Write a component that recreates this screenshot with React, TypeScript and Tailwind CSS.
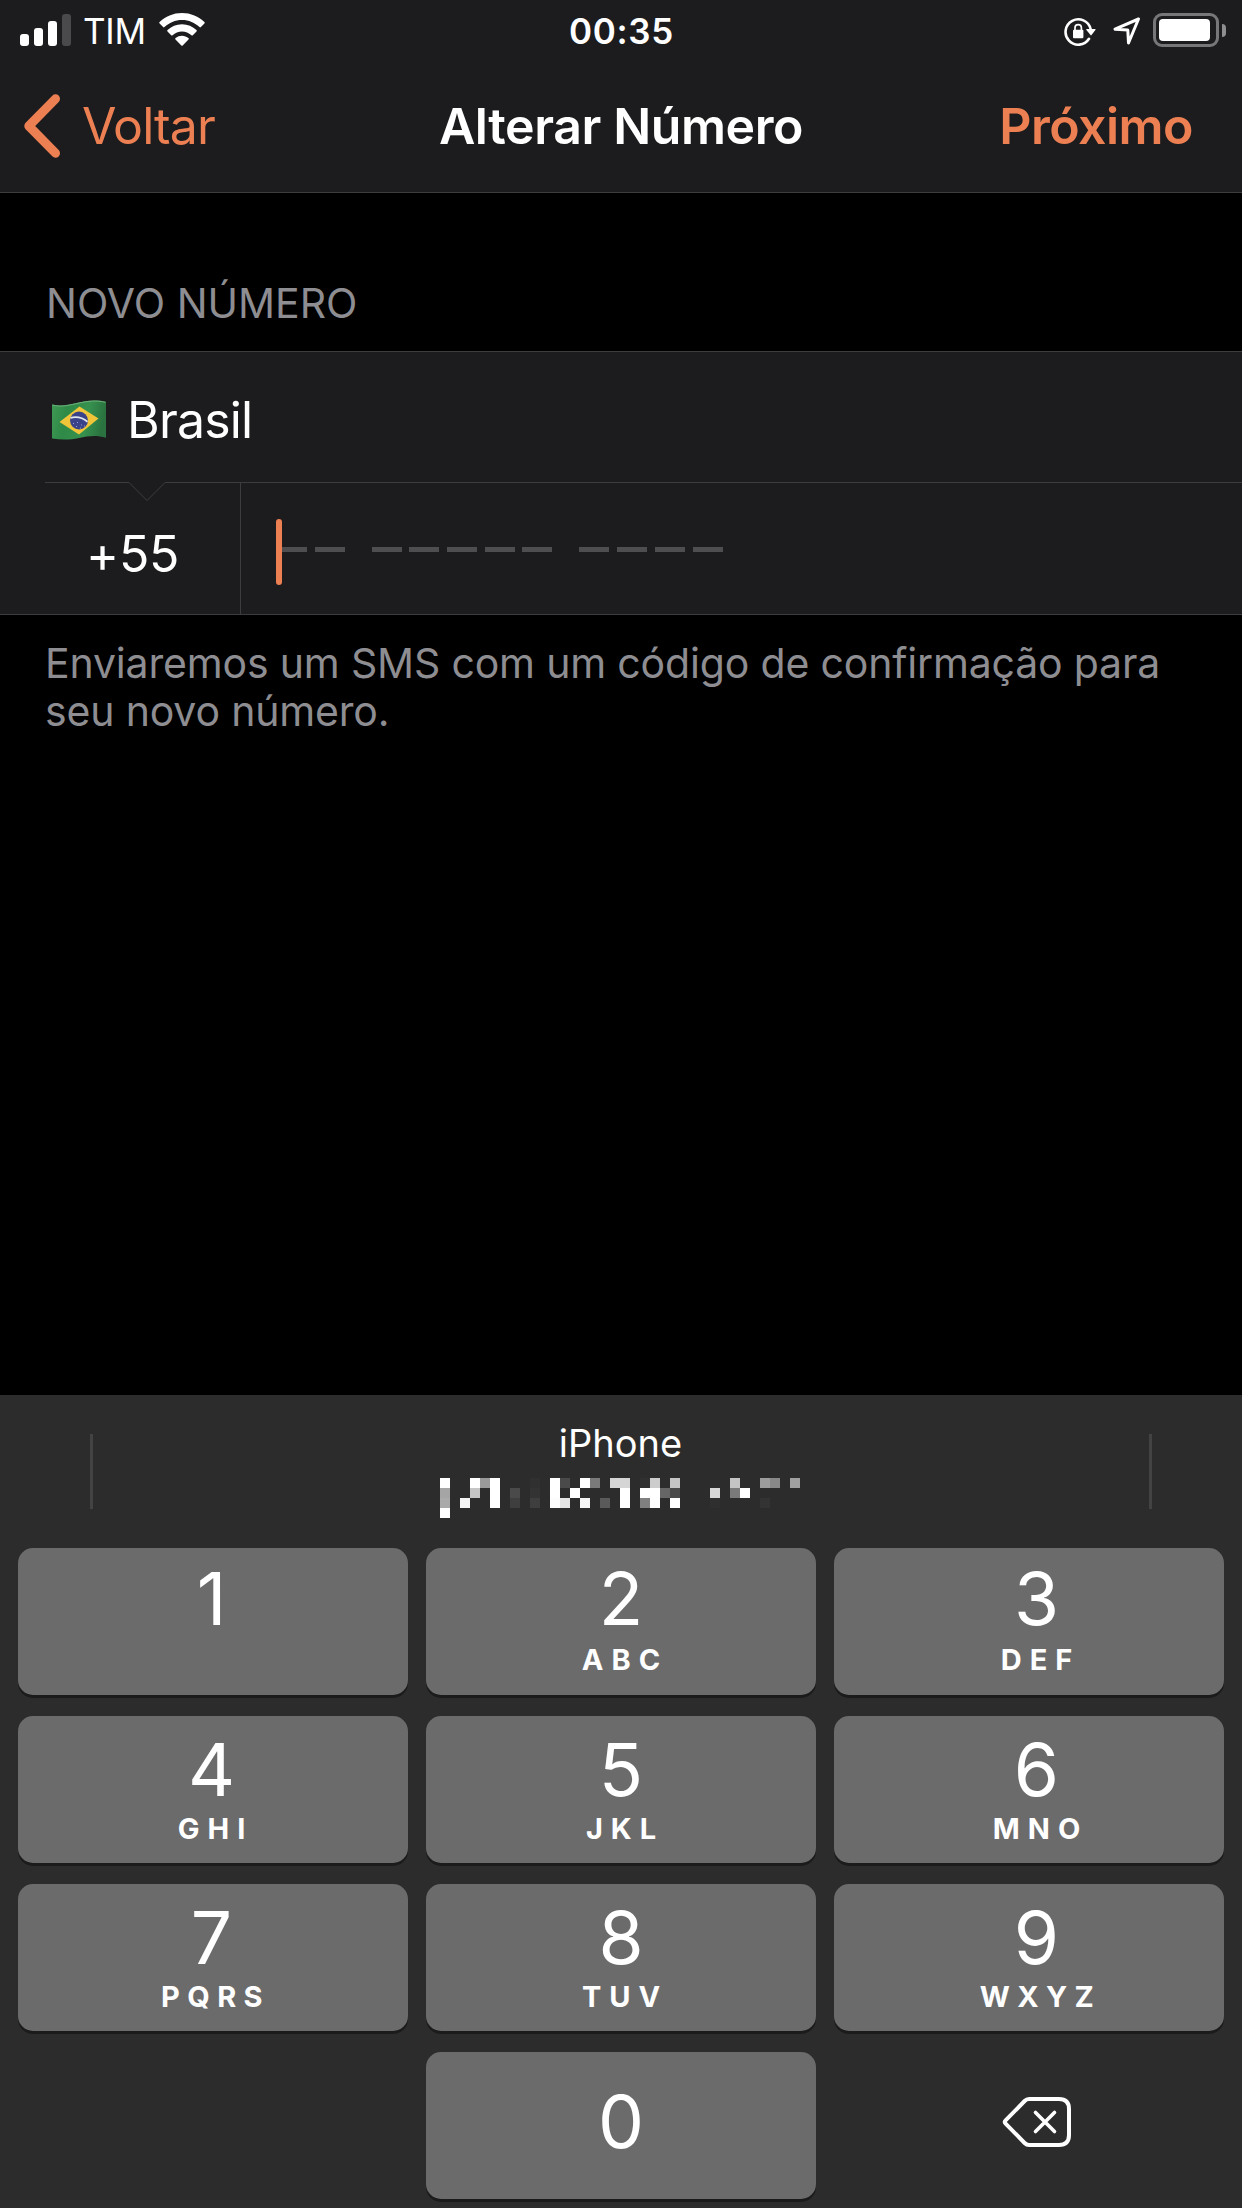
import clsx from "clsx";

type Key = { digit: string; letters?: string };

const keys: Key[] = [
  { digit: "1" },
  { digit: "2", letters: "ABC" },
  { digit: "3", letters: "DEF" },
  { digit: "4", letters: "GHI" },
  { digit: "5", letters: "JKL" },
  { digit: "6", letters: "MNO" },
  { digit: "7", letters: "PQRS" },
  { digit: "8", letters: "TUV" },
  { digit: "9", letters: "WXYZ" },
];

// [column, row, colour] on a 10px grid
const mosaic: [number, number, string][] = [
  [0, 0, "#fff"], [3, 0, "#fff"], [4, 0, "#999"], [5, 0, "#fff"], [9, 0, "#303030"],
  [11, 0, "#fff"], [12, 0, "#4a4a4a"], [14, 0, "#fff"], [15, 0, "#7a7a7a"],
  [17, 0, "#d5d5d5"], [18, 0, "#d5d5d5"], [20, 0, "#303030"], [21, 0, "#ccc"],
  [23, 0, "#c5c5c5"], [29, 0, "#c5c5c5"], [32, 0, "#9c9c9c"], [33, 0, "#888"], [35, 0, "#a0a0a0"],
  [0, 1, "#a5a5a5"], [3, 1, "#c5c5c5"], [5, 1, "#fff"], [7, 1, "#4a4a4a"], [9, 1, "#333"],
  [11, 1, "#fff"], [13, 1, "#fff"], [18, 1, "#fff"], [20, 1, "#fff"], [21, 1, "#fff"],
  [22, 1, "#666"], [23, 1, "#4a4a4a"], [27, 1, "#d8d8d8"], [29, 1, "#7a7a7a"], [30, 1, "#fff"],
  [0, 2, "#aaa"], [2, 2, "#f5f5f5"], [5, 2, "#fff"], [7, 2, "#3e3e3e"], [9, 2, "#3e3e3e"],
  [11, 2, "#fcfcfc"], [12, 2, "#e5e5e5"], [14, 2, "#f5f5f5"], [16, 2, "#5a5a5a"], [18, 2, "#fff"],
  [20, 2, "#808080"], [21, 2, "#fff"], [23, 2, "#fff"], [27, 2, "#2f2f2f"], [32, 2, "#333"],
  [0, 3, "#fff"],
];

function StatusBar() {
  return (
    <div className="flex h-[60px] pl-5 pr-4 text-white">
      <div className="flex flex-1 items-start">
        <div className="mt-[14px] flex h-8 items-end gap-[5px]">
          <span className="h-3 w-[9px] rounded-[3px] bg-white" />
          <span className="h-[18px] w-[9px] rounded-[3px] bg-white" />
          <span className="h-[25px] w-[9px] rounded-[3px] bg-white" />
          <span className="h-8 w-[9px] rounded-[3px] bg-[#4a4a4c]" />
        </div>
        <span className="ml-3 w-[63px] pt-[11px] text-[35px] leading-10 tracking-[-0.3px]">TIM</span>
        <svg className="ml-[13px] mt-[13px]" width="46" height="33" viewBox="0 0 46 33" fill="white">
          <path d="M23 0C31.800 0 39.600 3.400 45.400 9.100a1 1 0 0 1 0 1.400l-3.500 3.600a1 1 0 0 1-1.400 0C35.900 9.600 29.800 6.900 23 6.900S10.100 9.600 5.500 14.100a1 1 0 0 1-1.400 0L.6 10.500a1 1 0 0 1 0-1.400C6.400 3.400 14.200 0 23 0Z" />
          <path d="M23 11.300c5.600 0 10.700 2.200 14.500 5.800a1 1 0 0 1 0 1.400l-3.700 3.700a1 1 0 0 1-1.400 0A13.600 13.600 0 0 0 23 18.400c-3.600 0-6.900 1.400-9.400 3.800a1 1 0 0 1-1.400 0l-3.700-3.700a1 1 0 0 1 0-1.400C12.300 13.500 17.400 11.300 23 11.300Z" />
          <path d="M23 22.700c2.500 0 4.700.9 6.400 2.400a1 1 0 0 1 .1 1.500l-5.800 5.900a1 1 0 0 1-1.400 0l-5.800-5.900a1 1 0 0 1 .1-1.500A9.800 9.800 0 0 1 23 22.700Z" />
        </svg>
      </div>
      <span className="pr-[3px] pt-[11px] text-[35px] font-semibold leading-10 tracking-[0.7px]">00:35</span>
      <div className="flex flex-1 items-start justify-end">
        <svg className="mt-[17px]" width="32" height="30" viewBox="0 0 32 30">
          <path d="M25 21.800A12.700 12.700 0 1 1 26.600 12" fill="none" stroke="white" strokeWidth="2.600" strokeLinecap="round" />
          <path d="M22.800 12h8.200c.5 0 .7.500.4.900l-3.900 5.200c-.3.400-.7.400-1 0l-4.100-5.200c-.3-.4-.1-.9.4-.9Z" fill="white" />
          <rect x="9" y="12.700" width="10.400" height="8.600" rx="1" fill="white" />
          <path d="M11 14v-3.200a3.200 3.200 0 0 1 6.400 0V14" fill="none" stroke="white" strokeWidth="1.700" />
        </svg>
        <svg className="ml-[17px] mt-4" width="28" height="30" viewBox="0 0 28 30" fill="none" stroke="white" strokeWidth="3" strokeLinejoin="round">
          <path d="M25.500 3 2 13.200l12.800.8.700 13Z" />
        </svg>
        <div className="ml-[12px] mt-[13px] h-[34px] w-[66px] rounded-[9px] border-[3px] border-[#77777a] p-[3px]">
          <div className="h-[22px] w-[51px] rounded-[4px] bg-white" />
        </div>
        <span className="ml-[3px] mt-6 h-[13px] w-1 rounded-r-full bg-[#8e8e90]" />
      </div>
    </div>
  );
}

function NavBar() {
  return (
    <nav className="flex h-[132px] items-center px-6 text-[50px] leading-[60px] text-[#ed8053]">
      <div className="flex flex-1 items-center">
        <svg width="36" height="64" viewBox="0 0 36 64" fill="none" stroke="currentColor" strokeWidth="9" strokeLinecap="round" strokeLinejoin="round">
          <path d="M31.500 4.800 4.800 32l26.700 27.200" />
        </svg>
        <span className="ml-[22px] tracking-[-0.9px]">Voltar</span>
      </div>
      <h1 className="font-semibold tracking-[-0.4px] text-white">Alterar Número</h1>
      <div className="flex flex-1 justify-end">
        <span className="mr-[25px] font-semibold tracking-[-0.5px]">Próximo</span>
      </div>
    </nav>
  );
}

function BrazilFlag() {
  return (
    <svg width="54" height="40" viewBox="0 0 54 40">
      <defs>
        <linearGradient id="flag" x1="0" x2="1" y1="0" y2=".15">
          <stop offset="0" stopColor="#3f9a55" />
          <stop offset=".3" stopColor="#2f8a48" />
          <stop offset=".7" stopColor="#36914e" />
          <stop offset="1" stopColor="#2a7340" />
        </linearGradient>
      </defs>
      <path d="M0 4.500C9 7 18 4.500 27 2.500S45-.5 54 1.800v36C45 35 36 36 27 38S9 40 0 38.500Z" fill="url(#flag)" />
      <path d="M.5 5C9 7.500 18 5 27 3s18-3 26.500-.7" fill="none" stroke="#6fb47d" strokeWidth="1" />
      <path d="M7.500 22 27.500 6.500 46.500 18.500 27 34.500Z" fill="#f0c53a" />
      <circle cx="27" cy="20.500" r="9" fill="#3a4389" />
      <path d="M18.500 17.800c6-1.500 12-.3 17 4" fill="none" stroke="#dfe6ee" strokeWidth="1.800" />
      <path d="M21 23.500h1M25 22.500h1M24 26.500h1M29 25h1M28 28h1M32 26h1" stroke="#9aa0cf" strokeWidth="1" />
    </svg>
  );
}

function Dashes({ count }: { count: number }) {
  return (
    <div className="flex gap-[7.700px]">
      {Array.from({ length: count }, (_, i) => (
        <span key={i} className="h-[5px] w-[30px] bg-[#4e4e50]" />
      ))}
    </div>
  );
}

function PhoneForm() {
  return (
    <section>
      <h2 className="pl-[46px] pt-[85px] text-[41px] leading-[50px] text-[#8d8d92]">NOVO NÚMERO</h2>
      <div className="mt-[23px] border-y border-[#3c3c3f] bg-[#1c1c1e] text-white">
        <div className="flex h-[130px] items-center pl-[52px] pt-[5px]">
          <BrazilFlag />
          <span className="ml-[21px] pt-px text-[50px] leading-[60px] tracking-[-0.8px]">Brasil</span>
        </div>
        {/* divider with the notch that points at the country code */}
        <svg className="block" width="1242" height="20" viewBox="0 0 1242 20" fill="none" stroke="#3c3c3f">
          <path d="M45 .5h84l18 18 18-18h1077" />
        </svg>
        <div className="-mt-[19px] flex h-[131px]">
          <div className="w-[241px] border-r border-[#3c3c3f] pl-[86px] pt-[41px] text-[50px] leading-[60px] tracking-[-0.2px]">
            +55
          </div>
          <div className="relative flex items-start gap-[27px] pl-[36px] pt-[64px]">
            <Dashes count={2} />
            <Dashes count={5} />
            <Dashes count={4} />
            <span className="absolute left-[35px] top-9 h-[66px] w-[6px] rounded-full bg-[#ed8053]" />
          </div>
        </div>
      </div>
      <p className="pl-[45px] pt-[24px] text-[41px] leading-[48px] tracking-[-0.17px] text-[#8d8d92]">
        Enviaremos um SMS com um código de confirmação para
        <br />
        seu novo número.
      </p>
    </section>
  );
}

function Suggestion() {
  return (
    <div className="flex h-[153px] justify-between px-[90px] pt-[39px]">
      <span className="h-[75px] w-[3px] bg-[#434343]" />
      <div className="flex w-[364px] flex-col items-center">
        <span className="-mt-[16px] pr-px text-[38px] leading-[50px] text-white">iPhone</span>
        <svg className="mt-[10px]" width="362" height="40" viewBox="0 0 362 40" shapeRendering="crispEdges">
          {mosaic.map(([x, y, fill]) => (
            <rect key={`${x}-${y}`} x={x * 10} y={y * 10} width="10" height="10" fill={fill} />
          ))}
        </svg>
      </div>
      <span className="h-[75px] w-[3px] bg-[#434343]" />
    </div>
  );
}

function KeyButton({ digit, letters, index }: Key & { index: number }) {
  return (
    <button
      className={clsx(
        "flex h-[147px] flex-col items-center rounded-[15px] bg-[#6b6b6b] text-white shadow-[0_3px_0_#1b1b1b]",
        index < 3 ? "pt-[11px]" : index < 9 ? "pt-[14px]" : "pt-[30px]",
        index % 3 === 0 && "pr-[3px]",
        index % 3 === 2 && "pl-[15px]",
      )}
    >
      <span className="text-[73px] leading-[80px]">{digit}</span>
      {letters && (
        <span
          className={clsx(
            "pl-[8px] text-[29px] font-bold leading-[36px]",
            letters.length > 3 ? "tracking-[7.400px]" : "tracking-[8px]",
            index < 3 ? "mt-[3px]" : "mt-px",
          )}
        >
          {letters}
        </span>
      )}
    </button>
  );
}

function Keyboard() {
  return (
    <div className="h-[813px] bg-[#2c2c2c]">
      <Suggestion />
      <div className="grid grid-cols-3 gap-x-[18px] gap-y-[21px] px-[18px]">
        {keys.map((key, i) => (
          <KeyButton key={key.digit} index={i} {...key} />
        ))}
        <span />
        <KeyButton digit="0" index={10} />
        <button className="flex h-[147px] items-center justify-center pl-[16px]">
          <svg className="-mt-[7px]" width="70" height="52" viewBox="0 0 70 52" fill="none" stroke="white" strokeWidth="4" strokeLinecap="round" strokeLinejoin="round">
            <path d="M27 3h30c6.500 0 10 3.500 10 10v26c0 6.500-3.500 10-10 10H27c-2 0-3-.6-4.400-2L3.600 27.600c-1.100-1.100-1.100-2.100 0-3.200L22.600 5C24 3.600 25 3 27 3Z" />
            <path d="m33.500 16.500 19 19m0-19-19 19" strokeWidth="3.600" />
          </svg>
        </button>
      </div>
    </div>
  );
}

export default function App() {
  return (
    <main className="flex h-[2208px] w-[1242px] flex-col overflow-hidden bg-black font-['Inter',sans-serif]">
      <header className="border-b border-[#3c3c3f] bg-[#1c1c1e]">
        <StatusBar />
        <NavBar />
      </header>
      <div className="flex-1">
        <PhoneForm />
      </div>
      <Keyboard />
    </main>
  );
}
